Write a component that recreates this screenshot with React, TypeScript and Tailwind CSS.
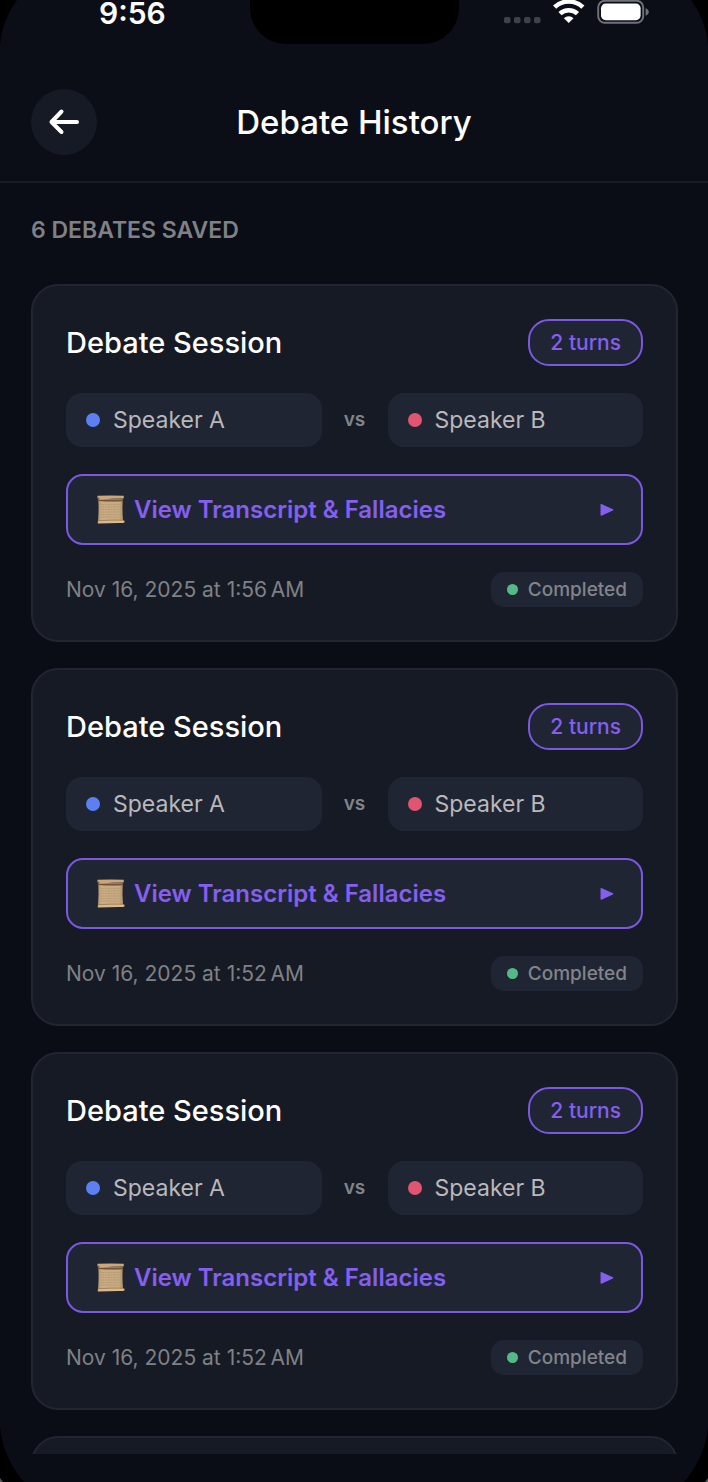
import React from "react";

type Debate = { id: number; turns: number; date: string };

const debates: Debate[] = [
  { id: 1, turns: 2, date: "Nov 16, 2025 at 1:56\u202fAM" },
  { id: 2, turns: 2, date: "Nov 16, 2025 at 1:52\u202fAM" },
  { id: 3, turns: 2, date: "Nov 16, 2025 at 1:52\u202fAM" },
  { id: 4, turns: 2, date: "Nov 16, 2025 at 1:52\u202fAM" },
];

function ScrollIcon() {
  return (
    <svg aria-hidden="true" className="h-[30px] w-[30px] shrink-0" viewBox="0 0 30 30">
      <defs>
        <linearGradient id="paper" x1="0" y1="0" x2="1" y2="0">
          <stop offset="0" stopColor="#b3956f" />
          <stop offset="0.15" stopColor="#c9ab84" />
          <stop offset="0.85" stopColor="#c6a881" />
          <stop offset="1" stopColor="#a98a64" />
        </linearGradient>
      </defs>
      <path d="M2.3 4 H26.8 Q26 15 27.2 27 H2 Q3 15 2.3 4Z" fill="url(#paper)" />
      <path d="M2.3 4.4 H26.8 V6.2 Q15 7 2.5 6Z" fill="#705339" />
      <path d="M1.4 0.800 Q15 0.300 27.600 0.800 Q28.200 2.400 27.600 3.500 Q15 3.500 2.8 4.800 Q1 4 1.4 0.800Z" fill="#cda77b" />
      <path d="M1.5 2.800 Q2.4 2.200 3.6 3.200 L3 4.900 Q1.5 4.800 1.5 2.800Z" fill="#80603f" />
      <path d="M1.8 26.2 Q15 25.4 27 25.6 Q28.6 25 28.6 26.8 Q28.4 28 27 28 Q14 27.900 1.8 28.400Z" fill="#dcb98a" />
      <path d="M2.2 25.8 Q15 24.8 27 25.1" stroke="#927452" strokeWidth="0.7" fill="none" />
      <path
        d="M5 9.5H24.5M5 12H24.5M5 14.5H24.5M5 17H24.5M5 19.5H24.5M5 22H24.5"
        stroke="#b4966f"
        strokeWidth="0.7"
        strokeDasharray="3 0.7 1.6 0.6"
      />
    </svg>
  );
}

function StatusBar() {
  return (
    <div className="grid h-[44px] grid-cols-[1fr_209px_1fr] items-start">
      <div className="flex h-[26px] items-center pl-[99px] text-[30px] leading-[26px] font-semibold">9:56</div>
      <div className="h-[44px] rounded-b-[36px] bg-black" />
      <div className="flex h-[26px] items-start justify-end pr-[59px]">
        <svg aria-hidden="true" className="h-[26px] w-[145px] shrink-0" viewBox="0 0 145 26">
          <g fill="#3f414a">
            <rect x="0" y="17" width="6.5" height="6.2" rx="2" />
            <rect x="10" y="17" width="6.5" height="6.2" rx="2" />
            <rect x="20" y="17" width="6.5" height="6.2" rx="2" />
            <rect x="30" y="17" width="6.5" height="6.2" rx="2" />
          </g>
          <g fill="none" stroke="#fff" strokeWidth="4.6">
            <path d="M50.6 7.2 A20.6 20.6 0 0 1 78.9 7.2" />
            <path d="M56 13.6 A13 13 0 0 1 73.5 13.6" />
          </g>
          <path d="M64.7 23 L59.9 18.2 A6.8 6.8 0 0 1 69.5 18.2Z" fill="#fff" />
          <rect x="94.2" y="0.8" width="45" height="22" rx="6.5" fill="none" stroke="#707279" strokeWidth="1.9" />
          <rect x="97" y="3.6" width="39.6" height="16.6" rx="4.6" fill="#fff" />
          <path d="M141.6 8 Q144.8 9.4 144.8 11.8 Q144.8 14.4 141.6 15.8Z" fill="#707279" />
        </svg>
      </div>
    </div>
  );
}

function Speaker({ name, dot }: { name: string; dot: string }) {
  return (
    <div className="flex h-[54px] flex-1 items-center gap-[13px] rounded-[16px] bg-[#202534] px-5">
      <span className={`size-[14px] rounded-full ${dot}`} />
      <span className="text-[23px] leading-[28px] text-[#b8b9bd]">{name}</span>
    </div>
  );
}

function DebateCard({ debate }: { debate: Debate }) {
  return (
    <article className="flex shrink-0 flex-col gap-[27px] rounded-[27px] border-2 border-[#232632] bg-[#161a24] p-[33px]">
      <div className="flex h-[47px] items-center justify-between">
        <h2 className="text-[29px] leading-[36px] font-medium text-white">Debate Session</h2>
        <span className="flex h-[47px] items-center rounded-[21px] border-2 border-[#7c57e0] bg-[#202534] px-5 text-[21px] leading-[24px] font-medium text-[#845ff0]">
          {debate.turns} turns
        </span>
      </div>
      <div className="flex items-center">
        <Speaker name="Speaker A" dot="bg-[#5c80f2]" />
        <span className="w-[66px] text-center text-[19px] leading-[24px] font-semibold text-[#828489]">vs</span>
        <Speaker name="Speaker B" dot="bg-[#e05570]" />
      </div>
      <button
        type="button"
        className="flex h-[71px] items-center rounded-[17px] border-2 border-[#7c57e0] bg-[#202534] pr-[27px] pl-[28px] text-[#845ff0]"
      >
        <ScrollIcon />
        <span className="ml-2 flex-1 text-left text-[24px] leading-[30px] font-semibold">
          View Transcript &amp; Fallacies
        </span>
        <svg aria-hidden="true" className="h-[14px] w-[14px]" viewBox="0 0 14 14">
          <path
            d="M1.2 1.7 V12.1 L12.6 6.9Z"
            fill="currentColor"
            stroke="currentColor"
            strokeWidth="1.4"
            strokeLinejoin="round"
          />
        </svg>
      </button>
      <div className="flex h-[35px] items-center justify-between">
        <time className="text-[21px] leading-[28px] text-[#7f8187]">{debate.date}</time>
        <span className="flex h-[35px] items-center gap-[10px] rounded-[13px] bg-[#202534] px-4 text-[19px] leading-[24px] font-medium text-[#828489]">
          <span className="size-[11px] rounded-full bg-[#55b886]" />
          Completed
        </span>
      </div>
    </article>
  );
}

export default function App() {
  return (
    <div className="relative flex h-screen flex-col overflow-hidden bg-[#0a0c16] pb-[28px] font-[Inter,'Liberation_Sans',sans-serif] text-white">
      <div className="shrink-0 border-b-2 border-[#191c26] bg-[#0b0d17]">
        <StatusBar />
        <header className="grid h-[137px] grid-cols-[66px_1fr_66px] items-center px-[31px] pt-[18px]">
          <button
            type="button"
            aria-label="Back"
            className="flex size-[66px] items-center justify-center rounded-full bg-[#161a24]"
          >
            <svg aria-hidden="true" className="h-[30px] w-[32px]" viewBox="0 0 32 30">
              <path
                d="M29 15 H3.500 M13.500 4.500 L3.500 15 L13.500 25"
                fill="none"
                stroke="#fff"
                strokeWidth="4"
                strokeLinecap="round"
                strokeLinejoin="round"
              />
            </svg>
          </button>
          <h1 className="text-center text-[33px] leading-[40px] font-medium">Debate History</h1>
        </header>
      </div>
      <main className="flex min-h-0 flex-1 flex-col gap-[26px] overflow-y-auto pr-[30px] pl-[31px] [scrollbar-width:none]">
        <p className="flex h-[75px] shrink-0 items-end pb-[14px] text-[23px] leading-[28px] font-semibold text-[#7f8187]">
          6 DEBATES SAVED
        </p>
        {debates.map((debate) => (
          <DebateCard key={debate.id} debate={debate} />
        ))}
      </main>
      <svg aria-hidden="true" className="pointer-events-none absolute top-0 left-0 h-[45px] w-[18px]" viewBox="0 0 18 45">
        <path d="M0 0 H17 Q1.5 21 0 45Z" />
      </svg>
      <svg aria-hidden="true" className="pointer-events-none absolute top-0 right-0 h-[45px] w-[18px]" viewBox="0 0 18 45">
        <path d="M18 0 H1 Q16.5 21 18 45Z" />
      </svg>
      <svg aria-hidden="true" className="pointer-events-none absolute bottom-0 left-0 h-[55px] w-[26px]" viewBox="0 0 26 55">
        <path d="M0 55 H24 Q3 31 0 0Z" />
        <path d="M0 51 L3 55 H0Z" fill="#55575c" />
      </svg>
      <svg aria-hidden="true" className="pointer-events-none absolute right-0 bottom-0 h-[55px] w-[26px]" viewBox="0 0 26 55">
        <path d="M26 55 H2 Q23 31 26 0Z" />
        <path d="M26 51 L23 55 H26Z" fill="#55575c" />
      </svg>
    </div>
  );
}
